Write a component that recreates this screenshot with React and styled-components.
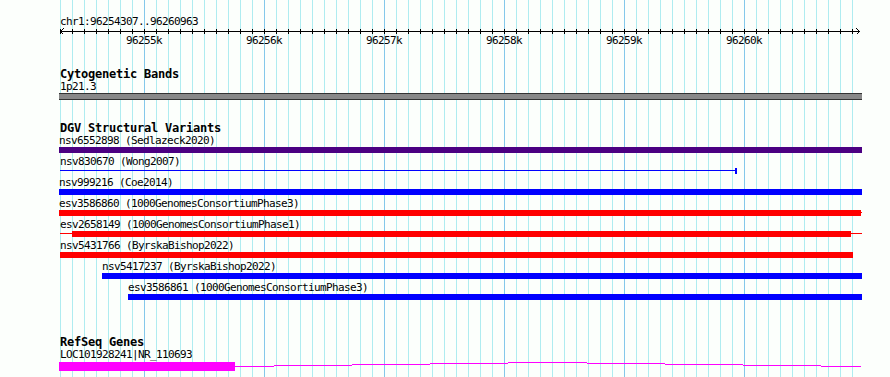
import React from "react"
import styled, { createGlobalStyle } from "styled-components"

// view: chr1:96254307..96260963, 100bp = 12px, panel starts at x=59
const START = 96254300
const PX = 0.12
const LEFT = 59
const PANEL_W = 803

const GlobalStyle = createGlobalStyle`
  body {
    margin: 0;
    background: #fcfffc;
  }
`

const Canvas = styled.div`
  position: relative;
  width: 890px;
  height: 377px;
  overflow: hidden;
  background: #fcfffc;
  font-family: "DejaVu Sans Mono", "Liberation Mono", monospace;
  font-size: 11px;
  letter-spacing: -0.62px;
  color: #000;
`

const GridLayer = styled.svg`
  position: absolute;
  left: 0;
  top: 0;
  z-index: 0;
`

const Panel = styled.div`
  position: relative;
  z-index: 1;
  width: ${PANEL_W}px;
  margin-left: ${LEFT}px;
  padding-top: 15px;
`

const Text = styled.div`
  height: 13px;
  line-height: 13px;
  white-space: nowrap;
  padding-left: ${(p) => p.$x ?? 1}px;
`

const Ruler = styled.div`
  position: relative;
  height: 22px;
`

const AxisSvg = styled.svg`
  display: block;
`

const TickLabel = styled.span`
  position: absolute;
  top: 6px;
  line-height: 13px;
  transform: translateX(-50%);
  white-space: nowrap;
`

const Track = styled.section`
  margin-top: ${(p) => p.$mt}px;
`

const TrackTitle = styled.div`
  height: 12px;
  line-height: 12px;
  padding-left: 1px;
  font-weight: bold;
  font-size: 12px;
  letter-spacing: -0.22px;
  white-space: nowrap;
`

const BandBar = styled.div`
  box-sizing: border-box;
  height: 7px;
  background: #888;
  border-top: 1px solid #333;
  border-bottom: 1px solid #333;
`

const Feature = styled.div`
  height: 21px;
`

const Glyph = styled.div`
  display: flex;
  align-items: flex-start;
  height: 6px;
`

const Segment = styled.div`
  flex: none;
  background: ${(p) => p.$color};
  height: ${(p) => (p.$kind === "thin" ? 1 : 6)}px;
  margin-top: ${(p) => (p.$kind === "thin" ? 2 : 0)}px;
`

const Gap = styled.div`
  flex: none;
`

const GeneGlyph = styled.div`
  display: flex;
  height: 9px;
  margin-top: 1px;
`

const Exon = styled.div`
  flex: none;
  width: ${(p) => p.$w}px;
  height: 9px;
  background: #ff00ff;
`

const gridLines = Array.from({ length: 67 }, (_, k) => ({
  x: 60 + k * 12,
  major: (k - 7) % 10 === 0,
}))

const ticks = [96255, 96256, 96257, 96258, 96259, 96260].map((kb) => ({
  label: `${kb}k`,
  x: (kb * 1000 - START) * PX + 1,
}))

// segments in panel pixels: [from, to, kind]
const variants = [
  { label: "nsv6552898 (Sedlazeck2020)", color: "#4b0082", segs: [[0, 803, "thick"]] },
  { label: "nsv830670 (Wong2007)", color: "#0000ff", segs: [[1, 676, "thin"], [676, 678, "thick"]] },
  { label: "nsv999216 (Coe2014)", color: "#0000ff", segs: [[0, 803, "thick"]] },
  { label: "esv3586860 (1000GenomesConsortiumPhase3)", color: "#ff0000", segs: [[0, 802, "thick"], [802, 803, "thin"]] },
  { label: "esv2658149 (1000GenomesConsortiumPhase1)", color: "#ff0000", segs: [[1, 13, "thin"], [13, 792, "thick"], [792, 803, "thin"]] },
  { label: "nsv5431766 (ByrskaBishop2022)", color: "#ff0000", segs: [[1, 794, "thick"]] },
  { label: "nsv5417237 (ByrskaBishop2022)", color: "#0000ff", segs: [[43, 803, "thick"]] },
  { label: "esv3586861 (1000GenomesConsortiumPhase3)", color: "#0000ff", segs: [[69, 803, "thick"]] },
]

const intron = [
  [235, 274, 4], [274, 352, 3], [352, 430, 2], [430, 508, 1], [508, 587, 0],
  [587, 665, 1], [665, 743, 2], [743, 821, 3], [821, 861, 4],
]

function Variant({ label, color, segs }) {
  let cursor = 0
  return (
    <Feature>
      <Text $x={segs[0][0]}>{label}</Text>
      <Glyph>
        {segs.map(([from, to, kind], i) => {
          const gap = from - cursor
          cursor = to
          return (
            <React.Fragment key={i}>
              {gap > 0 && <Gap style={{ width: gap }} />}
              <Segment $kind={kind} $color={color} style={{ width: to - from }} />
            </React.Fragment>
          )
        })}
      </Glyph>
    </Feature>
  )
}

export default function App() {
  return (
    <Canvas>
      <GlobalStyle />
      <GridLayer width="890" height="377" shapeRendering="crispEdges">
        {gridLines.map((l) => (
          <rect key={l.x} x={l.x} y="0" width="1" height="377" fill={l.major ? "#84c8ea" : "#aeecf0"} />
        ))}
      </GridLayer>
      <Panel>
        <Text>chr1:96254307..96260963</Text>
        <Ruler>
          <AxisSvg width={PANEL_W} height="7" shapeRendering="crispEdges">
            <rect x="1" y="3" width="800" height="1" fill="#000" />
            {gridLines.map((l) => (
              <rect key={l.x} x={l.x - LEFT} y="1" width="1" height="5" fill="#000" />
            ))}
            <path d="M4.5 0.5 L1.5 3.5 L4.5 6.5" fill="none" stroke="#000" strokeWidth="1" />
            <path d="M797.5 0.5 L800.5 3.5 L797.5 6.5" fill="none" stroke="#000" strokeWidth="1" />
          </AxisSvg>
          {ticks.map((t) => (
            <TickLabel key={t.label} style={{ left: t.x }}>{t.label}</TickLabel>
          ))}
        </Ruler>

        <Track $mt={18}>
          <TrackTitle>Cytogenetic Bands</TrackTitle>
          <Text>1p21.3</Text>
          <BandBar />
        </Track>

        <Track $mt={22}>
          <TrackTitle>DGV Structural Variants</TrackTitle>
          {variants.map((v) => (
            <Variant key={v.label} {...v} />
          ))}
        </Track>

        <Track $mt={34}>
          <TrackTitle>RefSeq Genes</TrackTitle>
          <Text>LOC101928241|NR_110693</Text>
          <GeneGlyph>
            <Exon $w={176} />
            <svg width="627" height="9" shapeRendering="crispEdges">
              {intron.map(([a, b, y]) => (
                <rect key={a} x={a - 235} y={y} width={b - a} height="1" fill="#ff00ff" />
              ))}
            </svg>
          </GeneGlyph>
        </Track>
      </Panel>
    </Canvas>
  )
}
